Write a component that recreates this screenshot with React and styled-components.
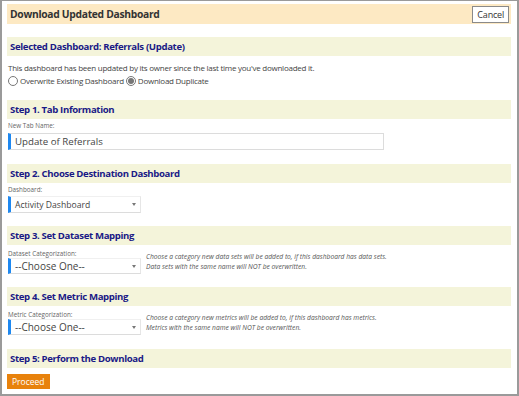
import styled, { createGlobalStyle } from "styled-components";

const Global = createGlobalStyle`
  html, body {
    margin: 0;
    padding: 0;
    background: #fff;
  }
  body {
    font-family: "Open Sans", "Liberation Sans", sans-serif;
    color: #444;
  }
`;

const Frame = styled.div`
  box-sizing: border-box;
  width: 519px;
  height: 396px;
  border: 1px solid #9a9a9a;
  border-left-width: 2px;
  border-right-width: 2px;
  border-bottom-width: 2px;
  padding: 3px 6px 0 5px;
`;

const Header = styled.div`
  display: flex;
  align-items: center;
  justify-content: space-between;
  height: 20px;
  padding: 0 2px 0 3px;
  background: #fde9c3;
`;

const Title = styled.h1`
  margin: 0;
  font-size: 10.3px;
  letter-spacing: -0.3px;
  font-weight: 700;
  color: #333;
`;

const CancelButton = styled.button`
  height: 17px;
  padding: 0 4px;
  background: #fff;
  border: 1px solid #8a8a8a;
  font-family: inherit;
  font-size: 9px;
  letter-spacing: -0.2px;
  color: #333;
`;

const Band = styled.h2`
  margin: ${(p) => p.$top || 13}px 0 0 0;
  height: 19px;
  line-height: 19px;
  padding-left: 3px;
  background: #f4f4da;
  font-size: 9.6px;
  letter-spacing: -0.35px;
  font-weight: 700;
  color: #1a1a86;
`;

const Text = styled.p`
  margin: 5px 0 0 1px;
  font-size: 8px;
  letter-spacing: -0.25px;
  line-height: 13px;
  color: #444;
`;

const RadioRow = styled.div`
  display: flex;
  align-items: center;
  gap: 2px;
  margin-left: 1px;
  font-size: 8px;
  letter-spacing: -0.25px;
  line-height: 13px;
`;

const RadioLabel = styled.label`
  display: flex;
  align-items: center;
  gap: 2px;
`;

const RadioDot = styled.span`
  box-sizing: border-box;
  width: 10px;
  height: 10px;
  border-radius: 50%;
  border: 1px solid #777;
  background: #fff;
  display: inline-flex;
  align-items: center;
  justify-content: center;

  &::after {
    content: "";
    width: 6px;
    height: 6px;
    border-radius: 50%;
    background: ${(p) => (p.$checked ? "#777" : "transparent")};
  }
`;

const FieldLabel = styled.div`
  margin: ${(p) => p.$mt ?? 2}px 0 0 1px;
  font-size: 6.3px;
  line-height: 9px;
  color: #666;
`;

const Input = styled.div`
  box-sizing: border-box;
  width: ${(p) => p.$w}px;
  height: ${(p) => p.$h || 17}px;
  margin: ${(p) => p.$mt ?? 3}px 0 0 1px;
  border: 1px solid #dcdcdc;
  border-left: 3px solid #1e88f0;
  padding-left: 4px;
  display: flex;
  align-items: center;
  font-size: 9.7px;
  color: #444;
`;

const Select = styled(Input)`
  position: relative;
  border-top-color: #f0f0f0;
  border-right-color: #e6e6e6;
  padding-right: 14px;
  font-size: ${(p) => p.$fs || 10}px;

  &::after {
    content: "";
    position: absolute;
    right: 4px;
    top: 6px;
    border-left: 2.5px solid transparent;
    border-right: 2.5px solid transparent;
    border-top: 3px solid #777;
  }
`;

const MappingRow = styled.div`
  display: flex;
  align-items: flex-end;
  gap: 5px;
`;

const MappingField = styled.div`
  display: flex;
  flex-direction: column;
`;

const Note = styled.div`
  font-size: 6.7px;
  font-style: italic;
  line-height: 10px;
  color: #555;
  padding-bottom: 2px;
`;

const Proceed = styled.button`
  margin: 3px 0 0 0;
  height: 15px;
  padding: 0 5px;
  border: none;
  background: #e8820c;
  color: #fff;
  font-family: inherit;
  font-size: 8.5px;
`;

function Mapping({ label, lines }) {
  return (
    <MappingRow>
      <MappingField>
        <FieldLabel $mt={4}>{label}</FieldLabel>
        <Select $w={133} $h={16} $mt={0} $fs={10}>
          --Choose One--
        </Select>
      </MappingField>
      <Note>
        {lines.map((l) => (
          <div key={l}>{l}</div>
        ))}
      </Note>
    </MappingRow>
  );
}

export default function App() {
  return (
    <>
      <Global />
      <Frame>
        <Header>
          <Title>Download Updated Dashboard</Title>
          <CancelButton>Cancel</CancelButton>
        </Header>

        <Band>Selected Dashboard: Referrals (Update)</Band>
        <Text>
          This dashboard has been updated by its owner since the last time
          you've downloaded it.
        </Text>
        <RadioRow>
          <RadioLabel>
            <RadioDot />
            Overwrite Existing Dashboard
          </RadioLabel>
          <RadioLabel>
            <RadioDot $checked />
            Download Duplicate
          </RadioLabel>
        </RadioRow>

        <Band $top={13}>Step 1. Tab Information</Band>
        <FieldLabel>New Tab Name:</FieldLabel>
        <Input $w={376} $h={17}>Update of Referrals</Input>

        <Band $top={14}>Step 2. Choose Destination Dashboard</Band>
        <FieldLabel>Dashboard:</FieldLabel>
        <Select $w={133} $h={17} $mt={2} $fs={8.6}>
          Activity Dashboard
        </Select>

        <Band $top={13}>Step 3. Set Dataset Mapping</Band>
        <Mapping
          label="Dataset Categorization:"
          lines={[
            "Choose a category new data sets will be added to, if this dashboard has data sets.",
            "Data sets with the same name will NOT be overwritten.",
          ]}
        />

        <Band $top={13}>Step 4. Set Metric Mapping</Band>
        <Mapping
          label="Metric Categorization:"
          lines={[
            "Choose a category new metrics will be added to, if this dashboard has metrics.",
            "Metrics with the same name will NOT be overwritten.",
          ]}
        />

        <Band $top={14}>Step 5: Perform the Download</Band>
        <Proceed>Proceed</Proceed>
      </Frame>
    </>
  );
}
